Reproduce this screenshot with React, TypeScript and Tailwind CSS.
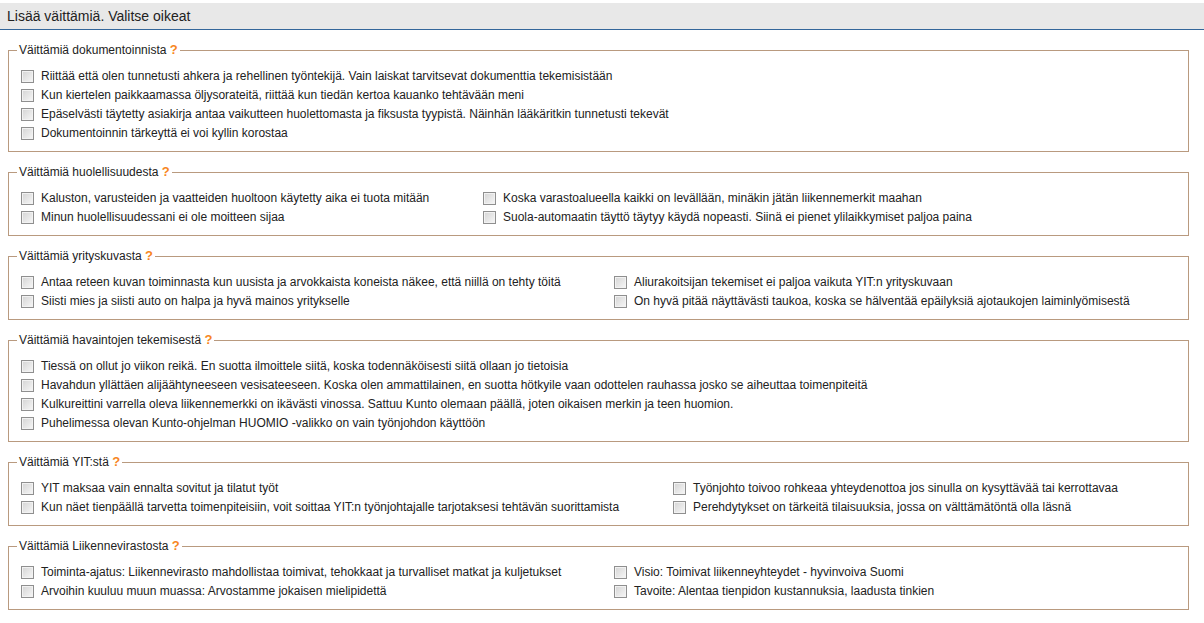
type Group = {
  title: string;
  cols?: string;
  items: string[];
};

const groups: Group[] = [
  {
    title: "Väittämiä dokumentoinnista",
    items: [
      "Riittää että olen tunnetusti ahkera ja rehellinen työntekijä. Vain laiskat tarvitsevat dokumenttia tekemisistään",
      "Kun kiertelen paikkaamassa öljysorateitä, riittää kun tiedän kertoa kauanko tehtävään meni",
      "Epäselvästi täytetty asiakirja antaa vaikutteen huolettomasta ja fiksusta tyypistä. Näinhän lääkäritkin tunnetusti tekevät",
      "Dokumentoinnin tärkeyttä ei voi kyllin korostaa",
    ],
  },
  {
    title: "Väittämiä huolellisuudesta",
    cols: "grid-cols-[462px_1fr]",
    items: [
      "Kaluston, varusteiden ja vaatteiden huoltoon käytetty aika ei tuota mitään",
      "Koska varastoalueella kaikki on levällään, minäkin jätän liikennemerkit maahan",
      "Minun huolellisuudessani ei ole moitteen sijaa",
      "Suola-automaatin täyttö täytyy käydä nopeasti. Siinä ei pienet ylilaikkymiset paljoa paina",
    ],
  },
  {
    title: "Väittämiä yrityskuvasta",
    cols: "grid-cols-[593px_1fr]",
    items: [
      "Antaa reteen kuvan toiminnasta kun uusista ja arvokkaista koneista näkee, että niillä on tehty töitä",
      "Aliurakoitsijan tekemiset ei paljoa vaikuta YIT:n yrityskuvaan",
      "Siisti mies ja siisti auto on halpa ja hyvä mainos yritykselle",
      "On hyvä pitää näyttävästi taukoa, koska se hälventää epäilyksiä ajotaukojen laiminlyömisestä",
    ],
  },
  {
    title: "Väittämiä havaintojen tekemisestä",
    items: [
      "Tiessä on ollut jo viikon reikä. En suotta ilmoittele siitä, koska todennäköisesti siitä ollaan jo tietoisia",
      "Havahdun yllättäen alijäähtyneeseen vesisateeseen. Koska olen ammattilainen, en suotta hötkyile vaan odottelen rauhassa josko se aiheuttaa toimenpiteitä",
      "Kulkureittini varrella oleva liikennemerkki on ikävästi vinossa. Sattuu Kunto olemaan päällä, joten oikaisen merkin ja teen huomion.",
      "Puhelimessa olevan Kunto-ohjelman HUOMIO -valikko on vain työnjohdon käyttöön",
    ],
  },
  {
    title: "Väittämiä YIT:stä",
    cols: "grid-cols-[652px_1fr]",
    items: [
      "YIT maksaa vain ennalta sovitut ja tilatut työt",
      "Työnjohto toivoo rohkeaa yhteydenottoa jos sinulla on kysyttävää tai kerrottavaa",
      "Kun näet tienpäällä tarvetta toimenpiteisiin, voit soittaa YIT:n työnjohtajalle tarjotaksesi tehtävän suorittamista",
      "Perehdytykset on tärkeitä tilaisuuksia, jossa on välttämätöntä olla läsnä",
    ],
  },
  {
    title: "Väittämiä Liikennevirastosta",
    cols: "grid-cols-[593px_1fr]",
    items: [
      "Toiminta-ajatus: Liikennevirasto mahdollistaa toimivat, tehokkaat ja turvalliset matkat ja kuljetukset",
      "Visio: Toimivat liikenneyhteydet - hyvinvoiva Suomi",
      "Arvoihin kuuluu muun muassa: Arvostamme jokaisen mielipidettä",
      "Tavoite: Alentaa tienpidon kustannuksia, laadusta tinkien",
    ],
  },
];

function Box() {
  return (
    <span className="mt-[2px] mr-[7px] h-[13px] w-[13px] shrink-0 border border-[#8f8f8f] bg-gradient-to-br from-[#d4d4d4] to-[#f7f7f7] shadow-[inset_0_0_0_1px_#f2f2f2]" />
  );
}

export default function App() {
  return (
    <div className="min-h-[623px] bg-white pt-[3px] font-['Liberation_Sans',Arial,sans-serif] text-[12px] text-[#222]">
      <div className="flex h-[27px] items-center border-b border-[#33669a] bg-[#e8e8e8] pl-[7px] text-[14px] text-[#222]">
        Lisää väittämiä. Valitse oikeat
      </div>

      <div className="flex flex-col gap-[12px] pt-[12px]">
        {groups.map((g) => (
          <fieldset
            key={g.title}
            className="ml-[8px] mr-[15px] border border-[#b99a7f] px-[8px] pb-[9px]"
          >
            <legend className="px-[2px] leading-[15px]">
              {g.title}{" "}
              <span className="font-bold text-[13px] text-[#f7861e]">?</span>
            </legend>
            <div className={`grid pl-[4px] pt-[8px] ${g.cols ?? "grid-cols-1"}`}>
              {g.items.map((t) => (
                <label key={t} className="flex h-[19px] items-center whitespace-nowrap">
                  <Box />
                  <span>{t}</span>
                </label>
              ))}
            </div>
          </fieldset>
        ))}
      </div>
    </div>
  );
}
